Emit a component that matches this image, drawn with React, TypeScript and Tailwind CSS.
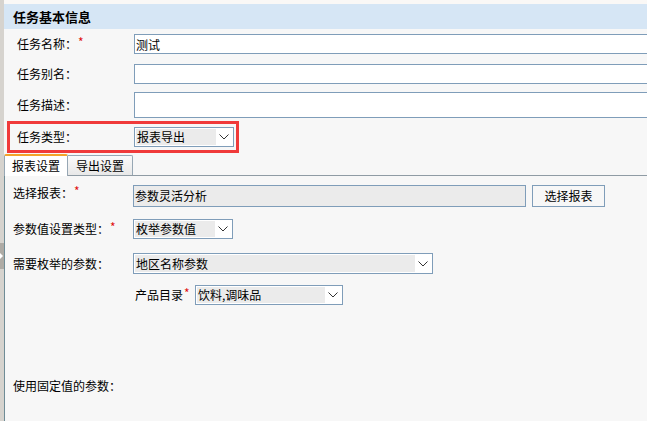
import React from 'react';

const Star = () => <span className="text-[#e01010] ml-[1px] text-[12px] relative -top-[2px]">*</span>;

const Chevron = () => (
  <svg width="10" height="6" viewBox="0 0 10 6" className="block">
    <polyline points="0.5,0.5 5,5 9.5,0.5" fill="none" stroke="#333" strokeWidth="1" />
  </svg>
);

interface SelectBoxProps {
  value: string;
  width: string;
  height: string;
}

const SelectBox: React.FC<SelectBoxProps> = ({ value, width, height }) => (
  <div className={`flex shrink-0 border border-[#7f9db9] bg-white p-[1px] ${width} ${height}`}>
    <div className="flex-1 bg-[#ebebeb] flex items-center pl-[1px] leading-[14px] whitespace-nowrap overflow-hidden">
      {value}
    </div>
    <div className="w-[16px] flex items-center justify-center">
      <Chevron />
    </div>
  </div>
);

const TextRow: React.FC<{ label: React.ReactNode; value?: string; h: string; mt: string }> = ({ label, value, h, mt }) => (
  <div className={`flex items-center ${mt}`}>
    <div className="w-[130px] shrink-0 pl-[13px] leading-[16px] whitespace-nowrap">{label}</div>
    <input
      readOnly
      value={value ?? ''}
      className={`w-[600px] shrink-0 ${h} border border-[#7f9db9] bg-white px-[1px] text-[12px] outline-none`}
    />
  </div>
);

export default function App() {
  return (
    <div className="w-[647px] h-[421px] overflow-hidden flex bg-[#f7f7f7] text-black text-[12px] font-['Noto_Sans_CJK_SC','Noto_Sans',sans-serif]">
      {/* left splitter */}
      <div className="w-[4px] shrink-0 bg-[#d6d3ce] flex flex-col">
        <div className="h-[243px]" />
        <div className="h-[26px] bg-[#aeaba5] flex items-center">
          <span className="block w-0 h-0 border-y-[3px] border-y-transparent border-l-[3px] border-l-white" />
        </div>
      </div>

      <div className="flex-1 flex flex-col min-w-0 overflow-hidden">
        <div className="h-[4px] bg-[#faf8f6]" />
        <div className="h-[25px] bg-[#d6e6f5] pl-[9px] flex items-center font-bold text-[13px] leading-[16px]">
          任务基本信息
        </div>

        <TextRow label={<>任务名称：<Star /></>} value="测试" h="h-[20px]" mt="mt-[5px]" />
        <TextRow label="任务别名：" h="h-[20px]" mt="mt-[10px]" />
        <TextRow label="任务描述：" h="h-[26px]" mt="mt-[8px]" />

        <div className="mt-[3px] ml-[3px] w-[232px] h-[32px] border-[3px] border-[#f03a3a] flex items-center">
          <div className="w-[124px] shrink-0 pl-[7px] leading-[16px]">任务类型：</div>
          <SelectBox value="报表导出" width="w-[100px]" height="h-[20px]" />
        </div>

        {/* tabs */}
        <div className="mt-[1px] h-[22px] flex items-end border-b border-[#8f9ba4]">
          <div className="w-[64px] h-[22px] -mb-px bg-white border-l border-r border-[#97a7b4] border-t-2 border-t-[#f3a32a] rounded-t-[2px] flex items-center justify-center leading-[16px]">
            报表设置
          </div>
          <div className="w-[65px] h-[20px] bg-gradient-to-b from-[#fafafa] to-[#e8e8e8] border-t border-r border-[#97a7b4] rounded-tr-[2px] flex items-center justify-center leading-[16px]">
            导出设置
          </div>
        </div>

        {/* tab panel */}
        <div className="flex-1 border-l border-[#6f8c96] flex flex-col">
          <div className="mt-[9px] flex items-start">
            <div className="w-[128px] shrink-0 pl-[8px] leading-[16px] whitespace-nowrap">选择报表：<Star /></div>
            <div className="w-[393px] shrink-0 h-[22px] border border-[#7f9db9] bg-[#ebebeb] flex items-center pl-[1px] leading-[14px]">
              参数灵活分析
            </div>
            <button className="ml-[6px] shrink-0 w-[73px] h-[22px] border border-[#7f9db9] bg-[#f7f7f7] flex items-center justify-center leading-[14px] text-[12px]">
              选择报表
            </button>
          </div>

          <div className="mt-[12px] flex items-center">
            <div className="w-[128px] shrink-0 pl-[8px] leading-[16px] whitespace-nowrap">参数值设置类型：<Star /></div>
            <SelectBox value="枚举参数值" width="w-[100px]" height="h-[20px]" />
          </div>

          <div className="mt-[14px] flex items-center">
            <div className="w-[128px] shrink-0 pl-[8px] leading-[16px] whitespace-nowrap">需要枚举的参数：</div>
            <SelectBox value="地区名称参数" width="w-[300px]" height="h-[21px]" />
          </div>

          <div className="mt-[11px] flex items-center pl-[130px]">
            <div className="w-[60px] shrink-0 leading-[16px] whitespace-nowrap">产品目录<Star /></div>
            <SelectBox value="饮料,调味品" width="w-[148px]" height="h-[20px]" />
          </div>

          <div className="mt-[73px] pl-[8px] leading-[16px]">使用固定值的参数：</div>
        </div>
      </div>
    </div>
  );
}
